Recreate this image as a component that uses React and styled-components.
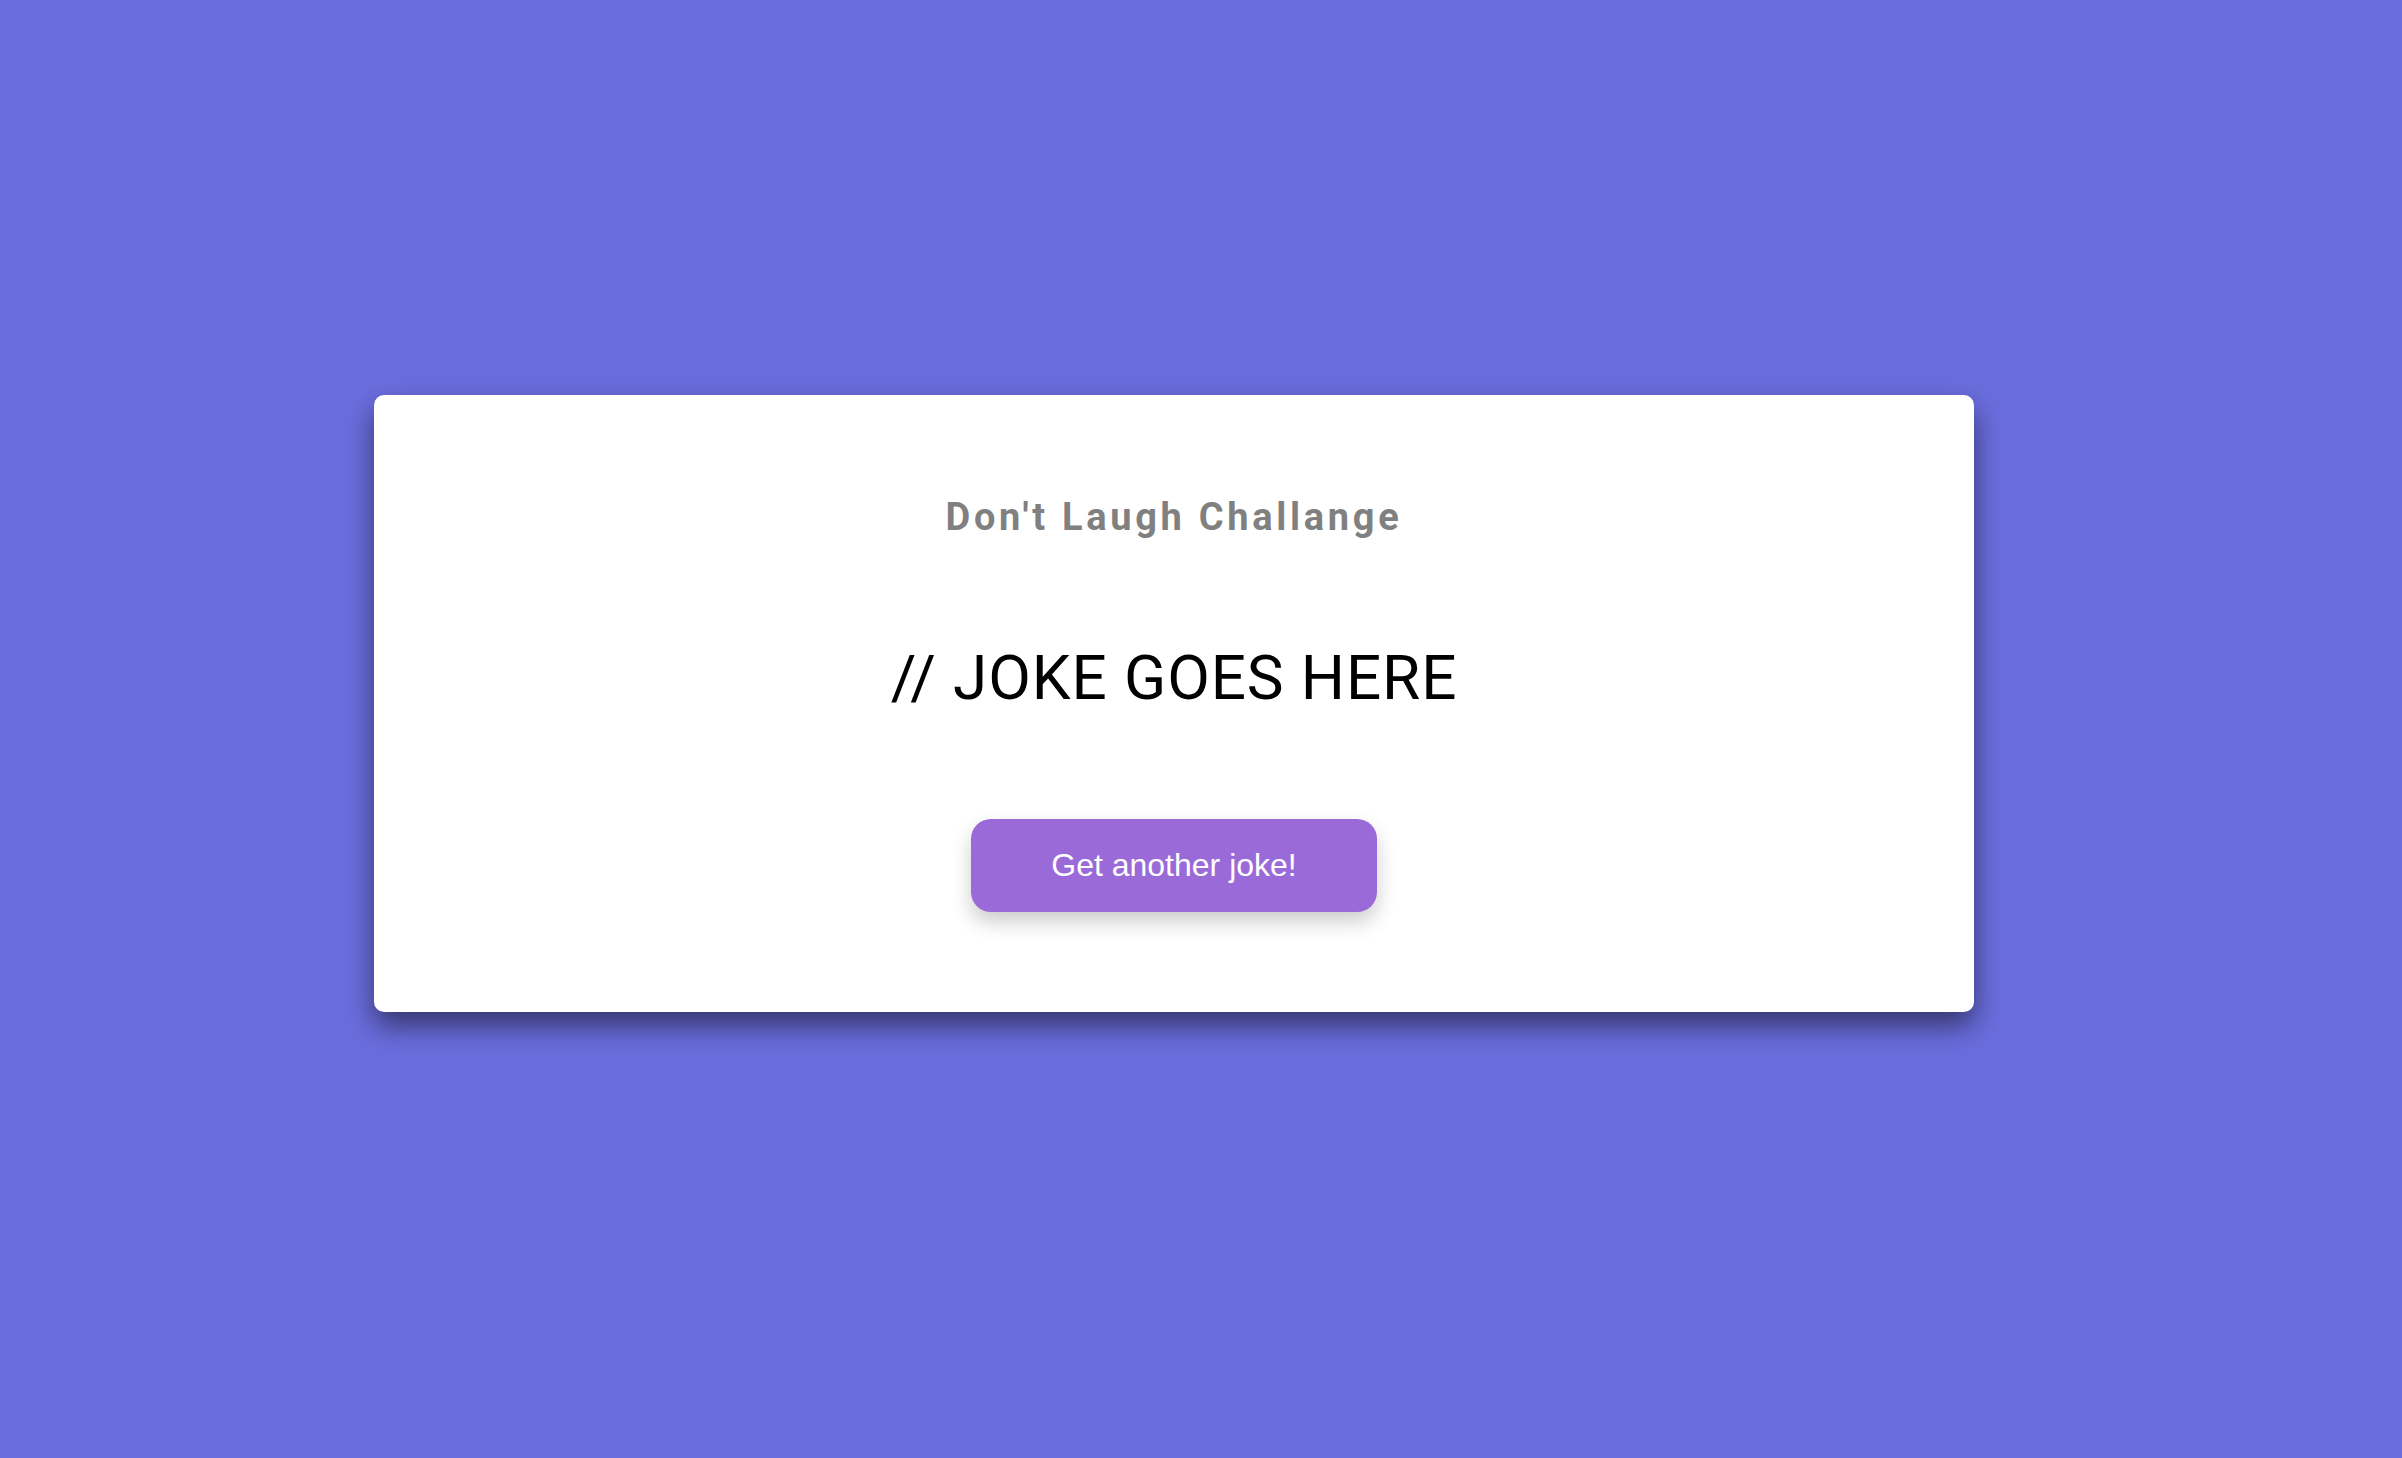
import React from "react";
import styled, { createGlobalStyle } from "styled-components";

const Global = createGlobalStyle`
  html, body { margin: 0; padding: 0; }
  body { background: #6a6ddd; font-family: Roboto, "Liberation Sans", sans-serif; }
`;

const Page = styled.div`
  min-height: 100vh;
  box-sizing: border-box;
  display: flex;
  align-items: center;
  justify-content: center;
  padding: 0 54px 52px 0;
`;

const Card = styled.div`
  width: 1600px;
  box-sizing: border-box;
  background: #ffffff;
  border-radius: 10px;
  box-shadow: 0 14px 28px rgba(0, 0, 0, 0.5);
  padding: 103px 40px 100px;
  display: flex;
  flex-direction: column;
  align-items: center;
`;

const Title = styled.h3`
  margin: 0;
  font-family: Roboto, sans-serif;
  font-weight: 700;
  font-size: 38px;
  line-height: 1;
  letter-spacing: 3.7px;
  color: #808080;
`;

const Joke = styled.div`
  margin-top: 111px;
  font-family: Roboto, sans-serif;
  font-weight: 400;
  font-size: 62px;
  line-height: 1;
  letter-spacing: 0.9px;
  color: #000;
`;

const Button = styled.button`
  margin-top: 110px;
  width: 406px;
  height: 93px;
  border: none;
  border-radius: 20px;
  background: #9a6bd8;
  color: #fff;
  font-family: "Liberation Sans", Arial, sans-serif;
  font-size: 32px;
  box-shadow: 0 10px 20px rgba(0, 0, 0, 0.2);
  cursor: pointer;
`;

export default function App() {
  return (
    <>
      <Global />
      <Page>
        <Card>
          <Title>Don't Laugh Challange</Title>
          <Joke>// JOKE GOES HERE</Joke>
          <Button>Get another joke!</Button>
        </Card>
      </Page>
    </>
  );
}
